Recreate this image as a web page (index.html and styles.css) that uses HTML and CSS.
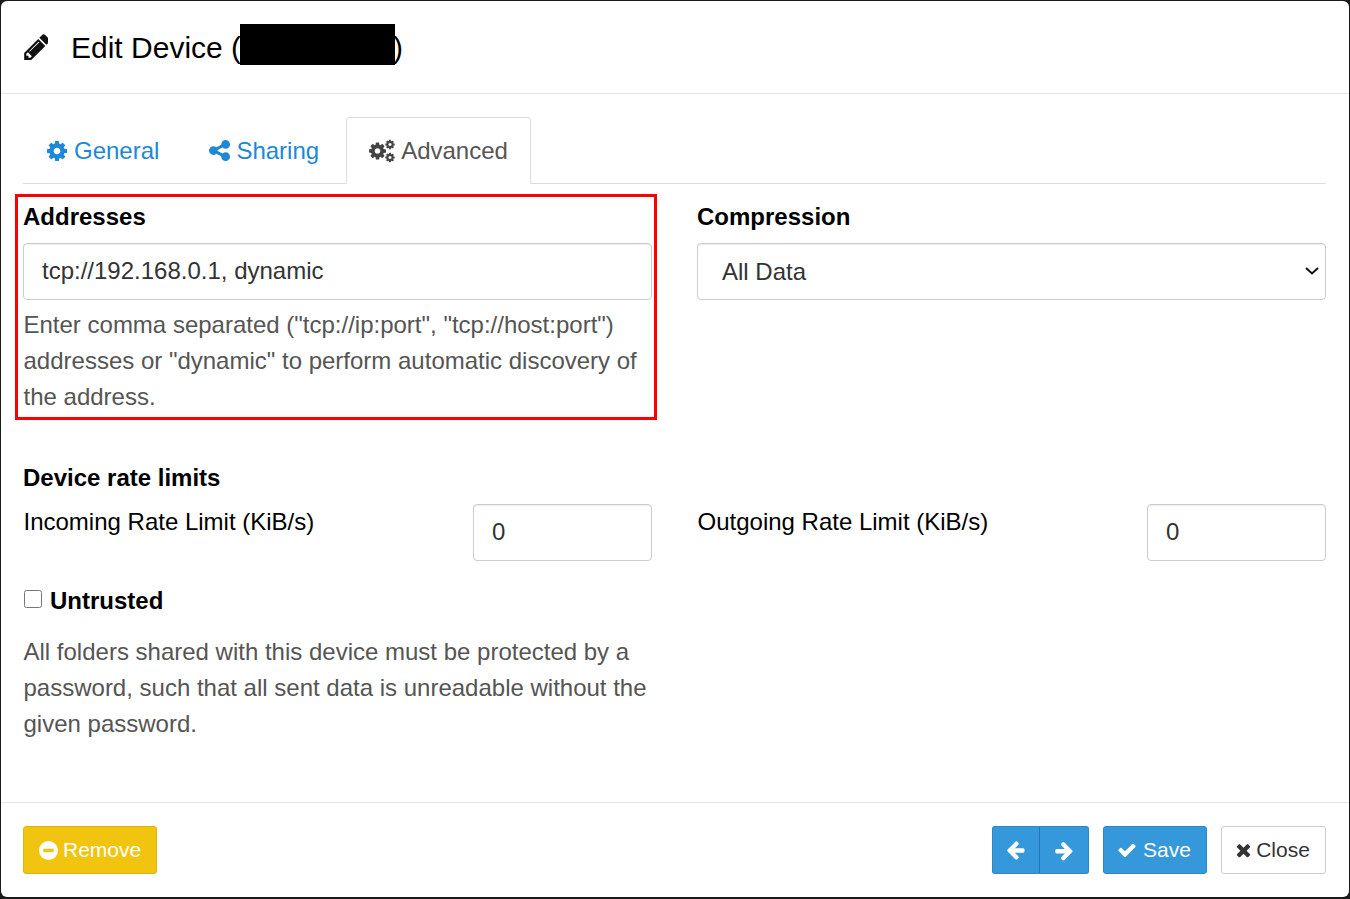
FILE: index.html
```html
<!DOCTYPE html>
<html lang="en">
<head>
<meta charset="utf-8">
<title>Edit Device</title>
<link rel="stylesheet" href="styles.css">
</head>
<body>
<svg class="defs" width="0" height="0" aria-hidden="true">
  <symbol id="i-cog" viewBox="0 0 1536 1792"><path transform="translate(-128 0)" d="M1152 896q0-106-75-181t-181-75-181 75-75 181 75 181 181 75 181-75 75-181zm512-109v222q0 12-8 23t-20 13l-185 28q-19 54-39 91 35 50 107 138 10 12 10 25t-9 23q-27 37-99 108t-94 71q-12 0-26-9l-138-108q-44 23-91 38-16 136-29 186-7 28-36 28h-222q-14 0-24.500-8.500t-11.500-21.500l-28-184q-49-16-90-37l-141 107q-10 9-25 9-14 0-25-11-126-114-165-168-7-10-7-23 0-12 8-23 15-21 51-66.500t54-70.500q-27-50-41-99l-183-27q-13-2-21-12.500t-8-23.500v-222q0-12 8-23t19-13l186-28q14-46 39-92-40-57-107-138-10-12-10-24 0-10 9-23 26-36 98.500-107.500t94.500-71.500q13 0 26 10l138 107q44-23 91-38 16-136 29-186 7-28 36-28h222q14 0 24.500 8.500t11.500 21.500l28 184q49 16 90 37l142-107q9-9 24-9 13 0 25 10 129 119 165 170 7 8 7 22 0 12-8 23-15 21-51 66.500t-54 70.500q26 50 41 98l183 28q13 2 21 12.500t8 23.500z"/></symbol>
</svg>
<div class="modal">
  <header class="modal-header">
    <svg class="pencil" viewBox="0 0 1536 1536"><path transform="translate(0 -128)" d="M491 1536l91-91-235-235-91 91v107h128v128h107zm523-928q0-22-22-22-10 0-17 7l-542 542q-7 7-7 17 0 22 22 22 10 0 17-7l542-542q7-7 7-17zm-54-192l416 416-832 832h-416v-416zm683 96q0 53-37 90l-166 166-416-416 166-165q36-38 90-38 53 0 91 38l235 234q37 39 37 91z"/></svg>
    <h1 class="title">Edit Device (<span class="redact"></span>)</h1>
  </header>
  <main class="modal-body">
    <nav class="tabs">
      <a class="tab">
        <svg class="ico ico-cog"><use href="#i-cog"/></svg>General
      </a>
      <a class="tab">
        <svg class="ico ico-share" viewBox="0 0 1536 1536"><path transform="translate(-128 -128)" d="M1344 1024q133 0 226.500 93.500t93.500 226.500-93.500 226.500-226.500 93.500-226.500-93.500-93.500-226.500q0-12 2-34l-360-180q-92 86-218 86-133 0-226.500-93.500t-93.500-226.500 93.500-226.500 226.500-93.500q126 0 218 86l360-180q-2-22-2-34 0-133 93.500-226.500t226.500-93.500 226.500 93.500 93.500 226.500-93.500 226.500-226.500 93.500q-126 0-218-86l-360 180q2 22 2 34t-2 34l360 180q92-86 218-86z"/></svg>Sharing
      </a>
      <a class="tab tab-active">
        <svg class="ico-cogs" viewBox="0 0 26 24">
          <use href="#i-cog" x="0" y="2" width="17" height="20"/>
          <use href="#i-cog" x="16" y="0" width="10" height="11"/>
          <use href="#i-cog" x="16" y="13" width="10" height="11"/>
        </svg>Advanced
      </a>
    </nav>

    <section class="grid-two top-row">
      <div class="field annotated">
        <label class="label">Addresses</label>
        <input class="control control-text" type="text" value="tcp://192.168.0.1, dynamic">
        <p class="help">Enter comma separated ("tcp://ip:port", "tcp://host:port") addresses or "dynamic" to perform automatic discovery of the address.</p>
      </div>
      <div class="field">
        <label class="label">Compression</label>
        <div class="select-wrap">
          <select class="control control-select">
            <option>All Data</option>
          </select>
          <svg class="chevron" viewBox="0 0 14 8"><path d="M1 1l6 5.500 6-5.500"/></svg>
        </div>
      </div>
    </section>

    <section class="rate">
      <div class="label">Device rate limits</div>
      <div class="grid-two">
        <div class="rate-item">
          <label class="rate-label">Incoming Rate Limit (KiB/s)</label>
          <input class="control control-text control-num" type="text" value="0">
        </div>
        <div class="rate-item">
          <label class="rate-label">Outgoing Rate Limit (KiB/s)</label>
          <input class="control control-text control-num" type="text" value="0">
        </div>
      </div>
    </section>

    <section class="grid-two">
      <div class="untrusted">
        <label class="check-row"><input class="check" type="checkbox"><span class="label">Untrusted</span></label>
        <p class="help help-gap">All folders shared with this device must be protected by a password, such that all sent data is unreadable without the given password.</p>
      </div>
    </section>
  </main>
  <footer class="modal-footer">
    <button class="btn btn-warning" type="button">
      <svg class="btn-ico btn-ico-minus" viewBox="0 0 20 20"><circle cx="10" cy="10" r="10" fill="#fff"/><rect x="4.500" y="8.200" width="11" height="3.600" rx=".6" fill="#f1c40f"/></svg>Remove
    </button>
    <div class="footer-right">
      <div class="btn-group">
        <button class="btn btn-primary btn-arrow" type="button" aria-label="Previous">
          <svg class="btn-ico btn-ico-solo" viewBox="0 0 1664 1792"><path d="M1664 896v128q0 53-32.500 90.500t-84.500 37.500h-704l293 294q38 36 38 90t-38 90l-75 76q-37 37-90 37-52 0-91-37l-651-652q-37-37-37-90 0-52 37-91l651-650q38-38 91-38 52 0 90 38l75 74q38 38 38 91t-38 91l-293 293h704q52 0 84.500 37.500t32.500 90.500z" transform="translate(-64 -64)"/></svg>
        </button>
        <button class="btn btn-primary btn-arrow" type="button" aria-label="Next">
          <svg class="btn-ico btn-ico-solo" viewBox="0 0 1664 1792"><path d="M1600 960q0 54-37 91l-651 651q-39 37-91 37-51 0-90-37l-75-75q-38-38-38-91t38-91l293-293h-704q-52 0-84.500-37.500t-32.500-90.500v-128q0-53 32.500-90.500t84.500-37.500h704l-293-294q-38-36-38-90t38-90l75-75q38-38 90-38 53 0 91 38l651 651q37 35 37 90z"/></svg>
        </button>
      </div>
      <button class="btn btn-primary" type="button">
        <svg class="btn-ico btn-ico-check" viewBox="0 0 1792 1792"><path d="M1671 566q0 40-28 68l-724 724-136 136q-28 28-68 28t-68-28l-136-136-362-362q-28-28-28-68t28-68l136-136q28-28 68-28t68 28l294 295 656-657q28-28 68-28t68 28l136 136q28 28 28 68z"/></svg>Save
      </button>
      <button class="btn btn-default" type="button">
        <svg class="btn-ico btn-ico-x" viewBox="0 0 1408 1792"><path transform="translate(-192 0)" d="M1490 1322q0 40-28 68l-136 136q-28 28-68 28t-68-28l-294-294-294 294q-28 28-68 28t-68-28l-136-136q-28-28-28-68t28-68l294-294-294-294q-28-28-28-68t28-68l136-136q28-28 68-28t68 28l294 294 294-294q28-28 68-28t68 28l136 136q28 28 28 68t-28 68l-294 294 294 294q28 28 28 68z"/></svg>Close
      </button>
    </div>
  </footer>
</div>
</body>
</html>
```

FILE: styles.css
```css
*, *::before, *::after { box-sizing: border-box; }
html, body { height: 100%; }
body {
  margin: 0;
  background: #1a1a1a;
  font-family: "Liberation Sans", Arial, sans-serif;
  font-size: 24px;
  line-height: 36px;
  color: #000;
  padding: 1px 1px 2px;
  overflow: hidden;
}
.defs { position: absolute; }
.modal {
  height: 896px;
  background: #fff;
  border-radius: 6px;
  display: flex;
  flex-direction: column;
}
.modal-header {
  height: 93px;
  flex: none;
  border-bottom: 1px solid #e5e5e5;
  display: flex;
  align-items: center;
  padding: 0 21px;
}
.pencil { width: 26px; height: 26px; fill: #111; flex: none; margin-right: 23px; margin-top: -1px; }
.title {
  margin: 0;
  font-size: 30px;
  font-weight: 400;
  line-height: 41px;
  white-space: nowrap;
  margin-top: 1px;
}
.redact {
  display: inline-block;
  width: 155px;
  height: 41px;
  background: #000;
  vertical-align: top;
  margin: -3px -2px 0 -1px;
}
.modal-body { flex: 1; padding: 23px 23px 0 22px; }
.tabs {
  display: flex;
  height: 67px;
  border-bottom: 1px solid #ddd;
}
.tab {
  display: flex;
  align-items: center;
  gap: 6px;
  height: 67px;
  padding: 0 23px 0 24px;
  color: #1e88d8;
  border: 1px solid transparent;
  border-radius: 4px 4px 0 0;
  white-space: nowrap;
}
.tab-active {
  color: #555;
  background: #fff;
  border-color: #ddd;
  border-bottom-color: #fff;
  margin-left: 3px;
  padding: 0 22px;
}
.ico { width: 20px; height: 24px; fill: #1e88d8; flex: none; }
.ico-cog { margin: 0 1px 0 -1px; }
.ico-share { height: 21px; width: 21px; margin-left: 1px; }
.ico-cogs { width: 26px; height: 24px; fill: #444; flex: none; }
.grid-two {
  display: grid;
  grid-template-columns: 629px 629px;
  column-gap: 45px;
}
.top-row { padding-top: 15px; height: 276px; }
.field { position: relative; }
.annotated::after {
  content: "";
  position: absolute;
  left: -8px;
  right: -5px;
  top: -5px;
  height: 226px;
  border: 3px solid #f00;
  pointer-events: none;
}
.label { display: block; font-weight: 700; height: 36px; line-height: 36px; margin-bottom: 8px; }
.control {
  display: block;
  width: 100%;
  height: 57px;
  padding: 0 18px;
  font: inherit;
  color: #333;
  background: #fff;
  border: 1px solid #ccc;
  border-radius: 4px;
  box-shadow: inset 0 1px 1px rgba(0,0,0,.075);
  outline: none;
}
.control-text { padding-bottom: 2px; }
.select-wrap { position: relative; }
.control-select { padding-left: 24px; appearance: none; }
.chevron {
  position: absolute;
  right: 7px;
  top: 24px;
  width: 14px;
  height: 8px;
  fill: none;
  stroke: #111;
  stroke-width: 2;
  pointer-events: none;
}
.control-num { width: 179px; flex: none; }
.help { margin: 7px 0 0; padding-left: .5px; color: #555; }
.rate-item { display: flex; justify-content: space-between; align-items: flex-start; }
.rate-label { line-height: 36px; padding-left: .5px; }
.untrusted { padding-top: 22px; }
.check-row { display: flex; align-items: center; height: 36px; }
.check-row .label { margin: 0; }
.check {
  appearance: auto;
  width: 18px;
  height: 18px;
  margin: -4px 8px 0 1px;
}
.help-gap { margin-top: 15px; }
.modal-footer {
  height: 95px;
  flex: none;
  border-top: 1px solid #e5e5e5;
  display: flex;
  justify-content: space-between;
  align-items: flex-start;
  padding: 23px 23px 0 22px;
}
.footer-right { display: flex; gap: 14px; }
.btn-group { display: flex; }
.btn {
  height: 48px;
  display: flex;
  align-items: center;
  justify-content: center;
  gap: 4px;
  padding: 0 15px;
  font-family: inherit;
  font-size: 21px;
  line-height: 30px;
  border: 1px solid transparent;
  border-radius: 3px;
  cursor: pointer;
}
.btn-ico { width: 20px; height: 20px; flex: none; fill: currentColor; }
.btn-warning { background: #f1c40f; border-color: #dfb50d; color: #fff; width: 134px; justify-content: flex-start; gap: 5px; }
.btn-ico-minus { width: 19px; height: 19px; }
.btn-primary { background: #3498db; border-color: #2a88c9; color: #fff; width: 104px; }
.btn-default { background: #fff; border-color: #ccc; color: #333; width: 105px; padding-right: 17px; }
.btn-arrow { width: 48px; padding: 0; }
.btn-arrow:first-child { border-radius: 3px 0 0 3px; border-right-color: #2377b3; }
.btn-arrow:last-child { width: 49px; border-left: 0; border-radius: 0 3px 3px 0; }
.btn-ico-solo { width: 21px; height: 21px; margin-right: 2px; }
.btn-ico-check { margin: 0 2px 0 -2px; }
.btn-ico-x { width: 17px; height: 20px; }
```
